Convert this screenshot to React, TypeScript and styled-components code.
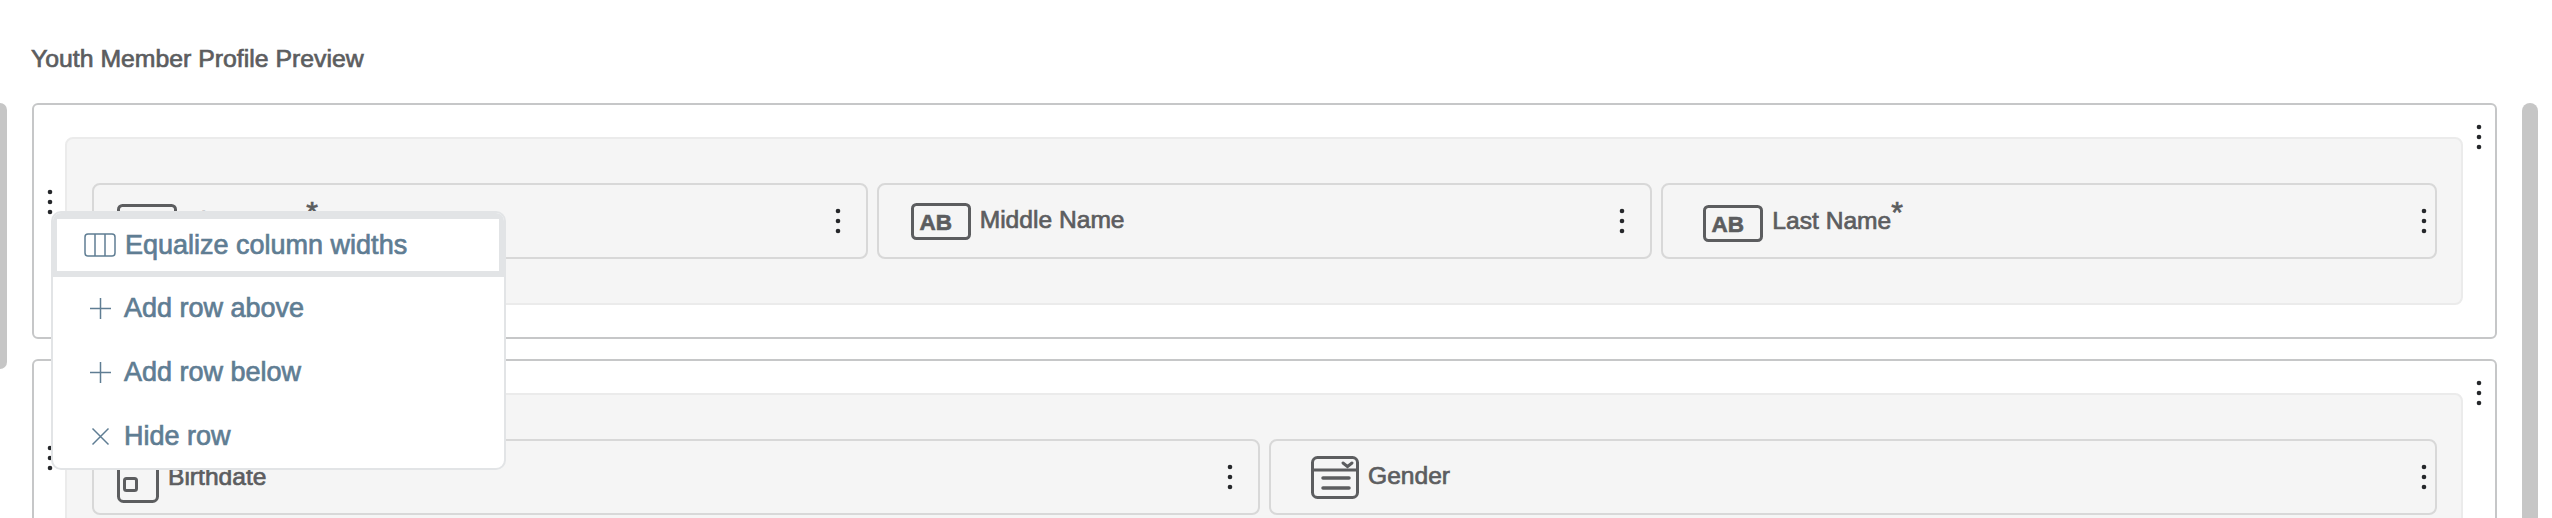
import type { ReactNode } from 'react';
import styled, { createGlobalStyle } from 'styled-components';

const GlobalStyle = createGlobalStyle`
  html, body {
    margin: 0;
    background: #fff;
  }
  body {
    font-family: "Liberation Sans", Arial, sans-serif;
  }
`;

const Page = styled.div`
  display: flex;
  align-items: flex-start;
  width: 2552px;
  height: 518px;
  overflow: hidden;
  position: relative;
`;

const LeftScroll = styled.div`
  flex: none;
  width: 7px;
  height: 266px;
  margin-top: 103px;
  background: #c6c6c6;
  border-radius: 0 7px 7px 0;
`;

const RightScroll = styled.div`
  flex: none;
  width: 16px;
  height: 420px;
  margin: 103px 0 0 25px;
  background: #c6c6c6;
  border-radius: 8px 8px 0 0;
`;

const Main = styled.main`
  flex: none;
  width: 2465px;
  margin-left: 25px;
`;

const Title = styled.h2`
  margin: 0 0 0 -1px;
  height: 103px;
  padding-top: 45px;
  box-sizing: border-box;
  font-size: 24.8px;
  line-height: 28px;
  font-weight: 400;
  color: #5c5d5f;
  -webkit-text-stroke: 0.7px #5c5d5f;
`;

const Card = styled.section`
  box-sizing: border-box;
  display: flex;
  align-items: flex-start;
  height: 236px;
  margin-bottom: 20px;
  border: 2px solid #c6c7c8;
  border-radius: 6px;
  background: #fff;
`;

const RowHandle = styled.div`
  flex: none;
  width: 31px;
  margin-top: 84px;
  display: flex;
  justify-content: center;
`;

const Panel = styled.div`
  flex: 1;
  box-sizing: border-box;
  display: grid;
  grid-auto-flow: column;
  grid-auto-columns: minmax(0, 1fr);
  gap: 9px;
  height: 168px;
  margin-top: 32px;
  padding: 44px 24px 44px 25px;
  background: #f5f5f5;
  border: 2px solid #ebebeb;
  border-radius: 8px;
`;

const PanelHandle = styled.div`
  flex: none;
  width: 32px;
  margin-top: 19px;
  display: flex;
  justify-content: center;
`;

const Field = styled.div<{ $inset: number; $last?: boolean }>`
  box-sizing: border-box;
  display: flex;
  align-items: center;
  gap: 9px;
  height: 76px;
  padding-left: ${p => p.$inset}px;
  padding-right: ${p => (p.$last ? 8 : 25)}px;
  border: 2px solid #d8d8d8;
  border-radius: 8px;
  background: #f5f5f5;
`;

const IconSlot = styled.div<{ $drop: number }>`
  flex: none;
  display: flex;
  margin-top: ${p => p.$drop}px;
`;

const Label = styled.span<{ $required: boolean }>`
  margin-bottom: ${p => (p.$required ? 0 : 2)}px;
  font-size: 24.6px;
  line-height: 28px;
  color: #5c5d5f;
  -webkit-text-stroke: 0.7px #5c5d5f;
  white-space: nowrap;
`;

const Required = styled.sup`
  font-size: 30px;
  line-height: 0;
  vertical-align: baseline;
  position: relative;
  top: -7px;
`;

const FieldKebab = styled.div`
  margin-left: auto;
  display: flex;
`;

const Menu = styled.ul`
  position: absolute;
  left: 51px;
  top: 211px;
  width: 455px;
  height: 259px;
  box-sizing: border-box;
  margin: 0;
  padding: 0;
  list-style: none;
  background: #fff;
  border: 2px solid #e2e4e6;
  border-radius: 10px;
  overflow: hidden;
`;

const MenuItem = styled.li<{ $active?: boolean }>`
  box-sizing: border-box;
  display: flex;
  align-items: center;
  height: 64px;
  padding-left: ${p => (p.$active ? 27 : 37)}px;
  padding-bottom: ${p => (p.$active ? 0 : 2)}px;
  gap: ${p => (p.$active ? 9 : 13)}px;
  border: solid #e2e4e6;
  border-width: ${p => (p.$active ? '6px 5px 6px 4px' : '0')};
  font-size: 27px;
  color: #5f7d93;
  -webkit-text-stroke: 0.7px #5f7d93;
  white-space: nowrap;
`;

const Kebab = () => (
  <svg width="6" height="26" viewBox="0 0 6 26" fill="#26282b">
    <circle cx="3" cy="3" r="2.3" />
    <circle cx="3" cy="13" r="2.3" />
    <circle cx="3" cy="23" r="2.3" />
  </svg>
);

const TextIcon = () => (
  <svg width="60" height="37" viewBox="0 0 60 37" fill="none">
    <rect x="1.5" y="1.500" width="57" height="34" rx="4" stroke="#5c5d5f" strokeWidth="3" />
    <text x="8.500" y="27" fontFamily="Liberation Sans, sans-serif" fontWeight="700" fontSize="22.500" fill="#5c5d5f" stroke="#5c5d5f" strokeWidth="0.6">AB</text>
  </svg>
);

const DateIcon = () => (
  <svg width="42" height="48" viewBox="0 0 42 48" fill="none" stroke="#5c5d5f">
    <rect x="1.5" y="1.500" width="39" height="45" rx="5" strokeWidth="3" />
    <rect x="7.500" y="23.500" width="12" height="12" rx="2" strokeWidth="3" />
  </svg>
);

const SelectIcon = () => (
  <svg width="48" height="43" viewBox="0 0 48 43" fill="none" stroke="#5c5d5f" strokeLinecap="round">
    <rect x="1.5" y="1.500" width="45" height="40" rx="5" strokeWidth="3" />
    <path d="M2 14h44" strokeWidth="3" />
    <path d="M32 7l4.500 3.500 4.500-3.500" strokeWidth="3" />
    <path d="M12 22h26M12 32h26" strokeWidth="3.500" />
  </svg>
);

const ColumnsIcon = () => (
  <svg width="32" height="24" viewBox="0 0 32 24" fill="none" stroke="#5f7d93" strokeWidth="1.500">
    <rect x="1" y="1" width="30" height="22" rx="3" />
    <path d="M11 1v22M21 1v22" />
  </svg>
);

const PlusIcon = () => (
  <svg width="21" height="21" viewBox="0 0 21 21" fill="none" stroke="#5f7d93" strokeWidth="1.500">
    <path d="M10.500 0v21M0 10.500h21" />
  </svg>
);

const CrossIcon = () => (
  <svg width="21" height="21" viewBox="0 0 21 21" fill="none" stroke="#5f7d93" strokeWidth="1.500">
    <path d="M2.500 2.500l16 16M18.500 2.500l-16 16" />
  </svg>
);

type FieldDef = { label: string; required: boolean; inset: number; drop: number; icon: ReactNode };

const rows: FieldDef[][] = [
  [
    { label: 'First Name', required: true, inset: 23, drop: 3, icon: <TextIcon /> },
    { label: 'Middle Name', required: false, inset: 32, drop: 1, icon: <TextIcon /> },
    { label: 'Last Name', required: true, inset: 40, drop: 5, icon: <TextIcon /> },
  ],
  [
    { label: 'Birthdate', required: true, inset: 23, drop: 4, icon: <DateIcon /> },
    { label: 'Gender', required: false, inset: 40, drop: 0, icon: <SelectIcon /> },
  ],
];

export default function App() {
  return (
    <Page>
      <GlobalStyle />
      <LeftScroll />
      <Main>
        <Title>Youth Member Profile Preview</Title>
        {rows.map(fields => (
          <Card key={fields[0].label}>
            <RowHandle><Kebab /></RowHandle>
            <Panel>
              {fields.map((f, i) => (
                <Field key={f.label} $inset={f.inset} $last={i === fields.length - 1}>
                  <IconSlot $drop={f.drop}>{f.icon}</IconSlot>
                  <Label $required={f.required}>
                    {f.label}
                    {f.required && <Required>*</Required>}
                  </Label>
                  <FieldKebab><Kebab /></FieldKebab>
                </Field>
              ))}
            </Panel>
            <PanelHandle><Kebab /></PanelHandle>
          </Card>
        ))}
      </Main>
      <RightScroll />
      <Menu>
        <MenuItem $active><ColumnsIcon />Equalize column widths</MenuItem>
        <MenuItem><PlusIcon />Add row above</MenuItem>
        <MenuItem><PlusIcon />Add row below</MenuItem>
        <MenuItem><CrossIcon />Hide row</MenuItem>
      </Menu>
    </Page>
  );
}
